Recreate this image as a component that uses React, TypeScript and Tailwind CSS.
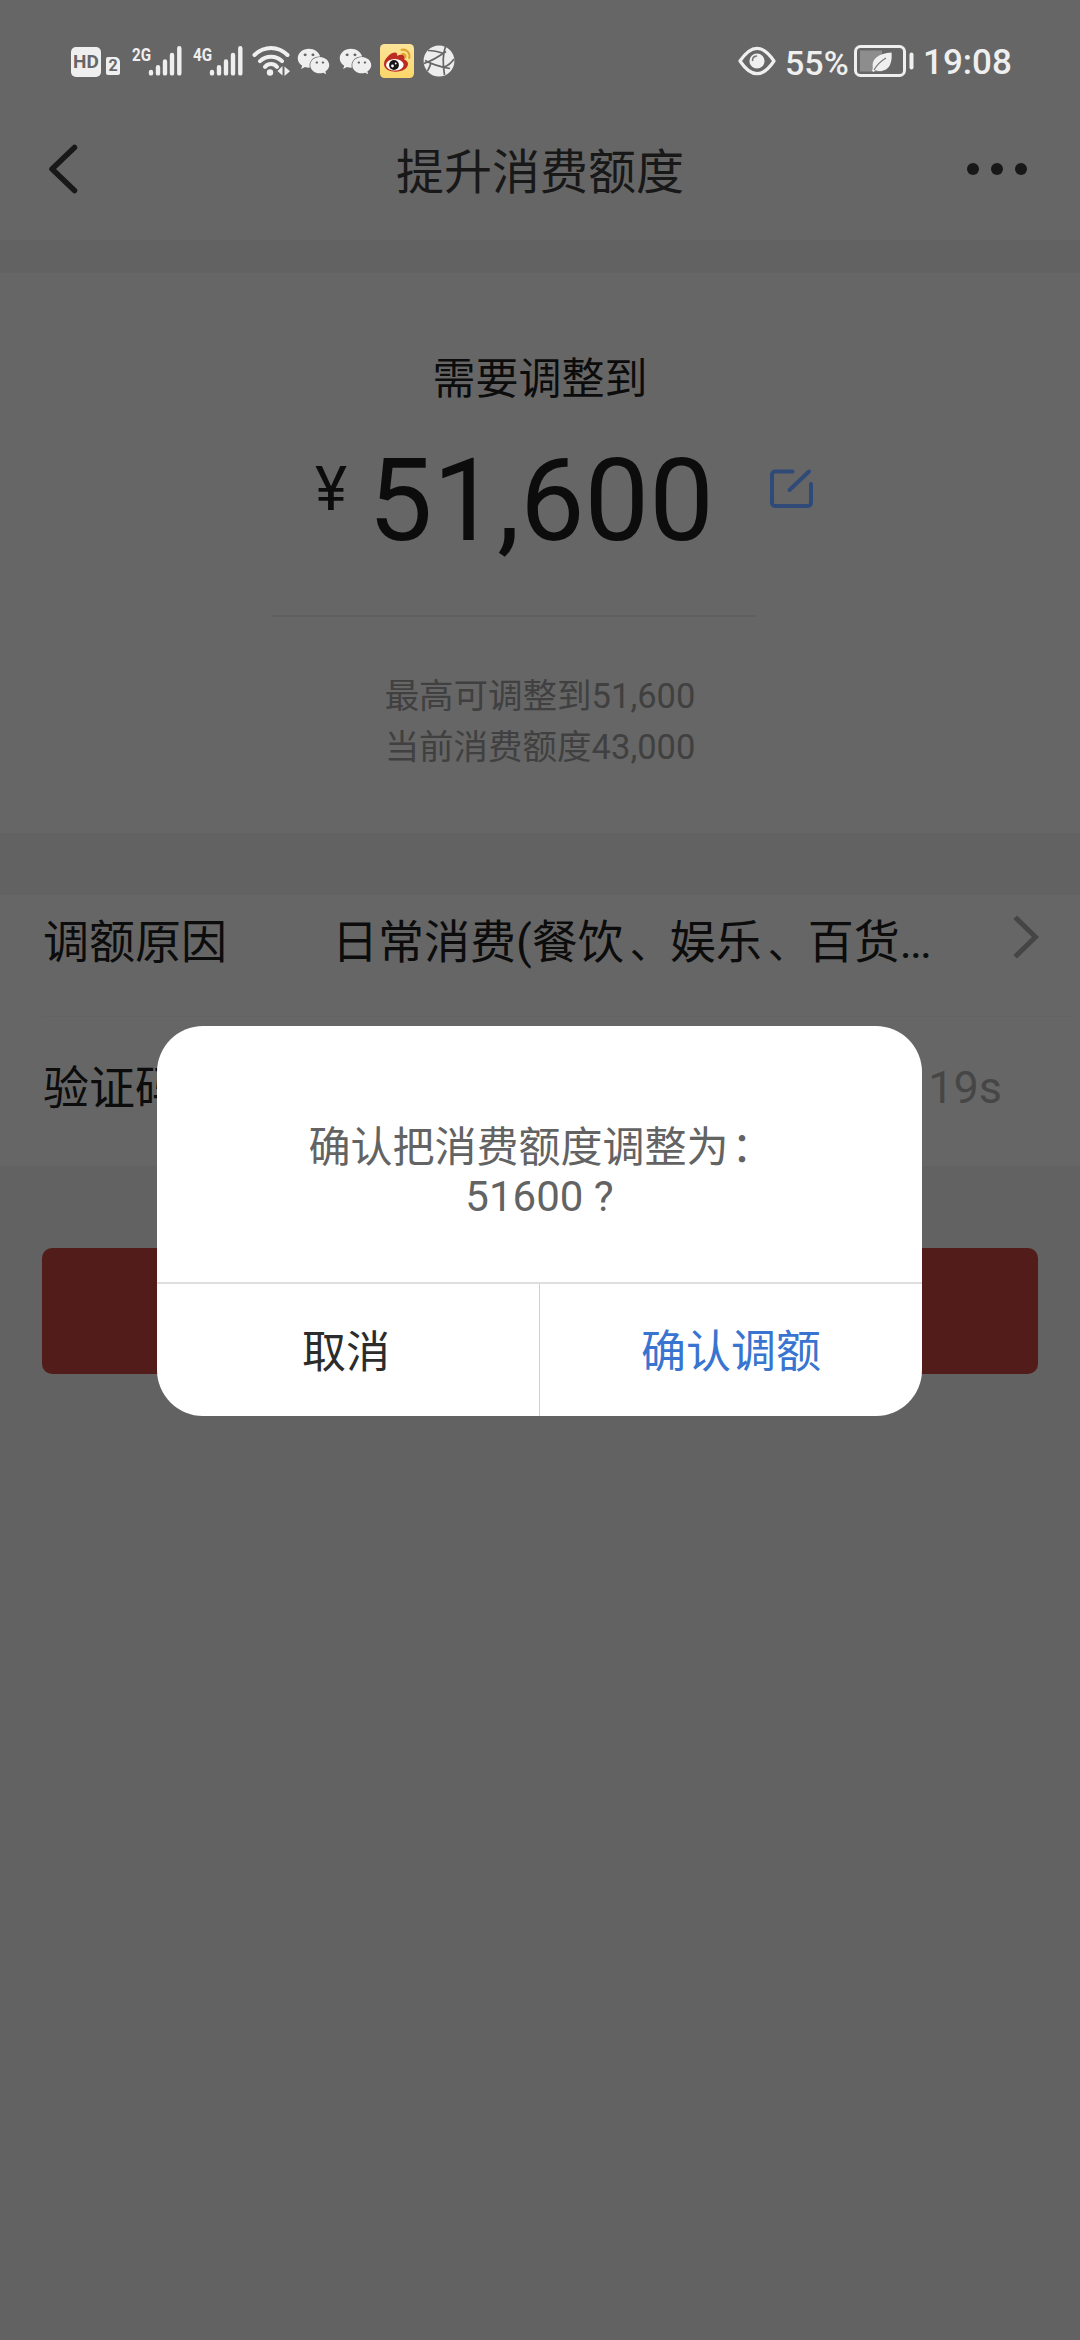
import React from "react";
import { FaWeixin } from "react-icons/fa";

const SANS = "font-['Roboto','Noto_Sans_CJK_SC',sans-serif]";

function SignalBars() {
  return (
    <svg className="block h-[32px] w-[36px]" viewBox="0 0 36 32" stroke="#efefef" strokeWidth="4.4" strokeLinecap="round">
      <path d="M4 28.4V27M11 28.4v-6.2M18 28.4V16.4M25 28.4V10M32.3 28.4V3.2" />
    </svg>
  );
}

function Signal({ label }: { label: string }) {
  return (
    <div className="flex items-start">
      <span className="mt-[1px] w-[15px] origin-left scale-x-[0.8] whitespace-nowrap text-[19px] leading-[17px] font-bold">{label}</span>
      <SignalBars />
    </div>
  );
}

function Wifi() {
  return (
    <svg className="block h-[34px] w-[40px]" viewBox="0 0 40 34" fill="none" stroke="#efefef" strokeWidth="4" strokeLinecap="round">
      <path d="M2.5 11C12 1.6 26 1.6 35.5 11M8 17.2c6-6 16-6 22 0M13 22.8c3.500-3.600 8.500-3.600 12 0" />
      <circle cx="18" cy="28.500" r="3.200" fill="#efefef" stroke="none" />
      <path d="M30.500 22v9.500l-5-4.500zM32.500 32v-9.500l5.500 4.800z" fill="#efefef" stroke="none" />
    </svg>
  );
}

function Weibo() {
  return (
    <svg className="block h-[34px] w-[34px]" viewBox="0 0 34 34">
      <defs>
        <linearGradient id="wb" x1="0" y1="0" x2="0" y2="1">
          <stop offset="0" stopColor="#fbe49a" />
          <stop offset="1" stopColor="#fbd669" />
        </linearGradient>
      </defs>
      <rect width="34" height="34" rx="4.500" fill="url(#wb)" />
      <path d="M4 20c0-5 6.500-11.500 11-11.500 2 0 2.500 1.500 2 3.300 3-1.600 8-2 7.700 1.700 0 1-.5 2-.3 2.300 2 .6 3.600 2 3.600 4.300 0 4.500-5.600 7.600-12.200 7.600C9 27.700 4 24.800 4 20z" fill="#bd2c22" />
      <ellipse cx="14.800" cy="20.800" rx="8.800" ry="5.800" fill="#fff" />
      <circle cx="14" cy="21" r="4.900" fill="#161616" />
      <circle cx="12.500" cy="22" r="1.400" fill="#fff" />
      <circle cx="15.700" cy="19.500" r="0.900" fill="#fff" />
      <path d="M21.500 5.800c5-1 9 3 7.700 8.200M22.300 10c2.300-.4 3.700 1.200 3 3.300" fill="none" stroke="#dfa22e" strokeWidth="2" strokeLinecap="round" />
    </svg>
  );
}

function Aperture() {
  return (
    <svg className="block h-[32px] w-[32px]" viewBox="0 0 32 32" fill="none">
      <circle cx="16" cy="16" r="15.400" fill="#ededed" />
      <path d="M1 18.500Q11 15 23 6.500M2 15.500Q12 21 27 23.500M22.500 1.500Q18.500 12 21.500 30M5 5.500Q12 5.500 21 8.500M4.500 26Q7 22 8 17.500M31 14Q27 20 21 22" stroke="#666" strokeWidth="1.700" />
    </svg>
  );
}

function Eye() {
  return (
    <svg className="block h-[30px] w-[38px]" viewBox="0 0 38 30" fill="none">
      <path d="M2 15C8 6 13 2.300 19 2.300S30 6 36 15C30 24 25 27.700 19 27.700S8 24 2 15z" stroke="#efefef" strokeWidth="3.200" strokeLinejoin="round" />
      <circle cx="19" cy="15" r="7.600" fill="#efefef" />
      <path d="M14.500 14.500c0-2.500 1.600-4.200 4-4.500" stroke="#777" strokeWidth="1.600" strokeLinecap="round" />
    </svg>
  );
}

function Battery() {
  return (
    <svg className="block h-[32px] w-[62px]" viewBox="0 0 62 32" fill="none">
      <rect x="6" y="5.500" width="22" height="21" fill="#8d8d8d" />
      <rect x="1.500" y="1.500" width="49" height="29" rx="5" stroke="#efefef" strokeWidth="3" />
      <path d="M57.500 9.500v13" stroke="#efefef" strokeWidth="4" strokeLinecap="round" />
      <path d="M37.500 7.500c1 9-1.500 18.500-11.500 18.500-1.700 0-3-.3-4.200-1l-2.300 2-1.800-1.500c1-1.200 1.300-1.800 1-3.500-1-8.500 6-13.500 18.800-14.500z" fill="#efefef" />
      <path d="M20 25c3-5.500 7-9 12-12" stroke="#777" strokeWidth="1.200" />
    </svg>
  );
}

function StatusBar() {
  return (
    <div className="flex h-[120px] items-start text-[#efefef]">
      <div className="mt-[47px] ml-[71px] flex h-[30px] w-[30px] items-center justify-center rounded-[5px] bg-[#efefef] text-[19px] font-bold text-[#666]">
        HD
      </div>
      <div className="mt-[57px] ml-[5px] flex h-[18px] w-[14px] items-center justify-center rounded-[2px] rounded-tr-[5px] bg-[#efefef] text-[16px] font-bold text-[#666]">
        2
      </div>
      <div className="mt-[45px] ml-[12px] flex">
        <Signal label="2G" />
      </div>
      <div className="mt-[45px] ml-[10px] flex">
        <Signal label="4G" />
      </div>
      <div className="mt-[44px] ml-[8px]">
        <Wifi />
      </div>
      <FaWeixin className="mt-[45px] ml-[5px] size-[33px]" />
      <FaWeixin className="mt-[45px] ml-[9px] size-[33px]" />
      <div className="mt-[44px] ml-[8px]">
        <Weibo />
      </div>
      <div className="mt-[45px] ml-[9px]">
        <Aperture />
      </div>
      <div className="mt-[46px] ml-[283px]">
        <Eye />
      </div>
      <span className="mt-[43px] ml-[9px] w-[69px] text-[34px] leading-[40px] font-medium whitespace-nowrap">55%</span>
      <div className="mt-[45px]">
        <Battery />
      </div>
      <span className="mt-[43px] ml-[7px] text-[35px] leading-[40px] font-medium whitespace-nowrap">19:08</span>
    </div>
  );
}

function Header() {
  return (
    <div className="flex h-[120px] items-start justify-between">
      <svg className="mt-[23px] ml-[47px] h-[52px] w-[34px]" viewBox="0 0 34 52" fill="none">
        <path d="M27.500 4.500L5 26l22.500 21.500" stroke="#181818" strokeWidth="5.500" strokeLinecap="round" strokeLinejoin="round" />
      </svg>
      <h1 className="mt-[23px] ml-[32px] text-[48px] leading-[60px] text-[#181818]">提升消费额度</h1>
      <div className="mt-[43px] mr-[53px] flex gap-[12px]">
        <i className="size-[12px] rounded-full bg-[#181818]" />
        <i className="size-[12px] rounded-full bg-[#181818]" />
        <i className="size-[12px] rounded-full bg-[#181818]" />
      </div>
    </div>
  );
}

function AmountPanel() {
  return (
    <section className="flex h-[560px] flex-col items-center bg-[#666]">
      <p className="mt-[76px] text-[43px] leading-[60px] text-[#0c0c0c]">需要调整到</p>
      <div className="flex w-full items-start text-[#0c0c0c]">
        <span className="mt-[44px] ml-[315px] w-[53px] text-[61px] leading-[72px]">¥</span>
        <span className="mt-[25px] w-[402px] text-[115px] leading-[134px]">51,600</span>
        <svg className="mt-[59px] h-[42px] w-[44px]" viewBox="0 0 44 42" fill="none" stroke="#304a78" strokeWidth="4" strokeLinecap="round">
          <path d="M22.500 3.500H5a3 3 0 0 0-3 3V35a3 3 0 0 0 3 3h33a3 3 0 0 0 3-3V16M39 3.500L19.500 22" />
        </svg>
      </div>
      <div className="mt-[47px] mr-[52px] h-[2px] w-[484px] bg-[#5f5f5f]" />
      <p className="mt-[54px] text-center text-[34.500px] leading-[51px] text-[#404040]">
        最高可调整到51,600
        <br />
        当前消费额度43,000
      </p>
    </section>
  );
}

function EnumComma() {
  return <span className="pl-[6px] text-[40px]">、</span>;
}

function FormRows() {
  return (
    <section className="h-[271px] bg-[#666] text-[46px] leading-[60px] text-[#0c0c0c]">
      <div className="flex h-[121px] items-start pt-[17px]">
        <span className="ml-[43px] w-[289px]">调额原因</span>
        <span className="w-[681px] whitespace-nowrap">
          日常消费(餐饮<EnumComma />娱乐<EnumComma />百货<span className="tracking-[-2px]">...</span>
        </span>
        <svg className="mt-[3px] h-[44px] w-[28px]" viewBox="0 0 28 44" fill="none">
          <path d="M4 4l18.500 18L4 40" stroke="#454545" strokeWidth="5" strokeLinecap="square" />
        </svg>
      </div>
      <div className="mr-[8px] ml-[43px] h-px bg-[#636363]" />
      <div className="flex items-start justify-between pt-[41px] pr-[78px] pl-[43px]">
        <span>验证码</span>
        <span className="text-[45px] text-[#464646]">19s</span>
      </div>
    </section>
  );
}

function ConfirmDialog() {
  return (
    <div className="absolute top-[1026px] left-[157px] flex h-[390px] w-[765px] flex-col overflow-hidden rounded-[46px] bg-white">
      <p className="h-[256px] pt-[97px] text-center text-[42px] leading-[49px] text-[#636363]">
        确认把消费额度调整为<span className="inline-block translate-x-[3px]">：</span>
        <br />
        51600 ?
      </p>
      <div className="flex grow border-t-2 border-[#dedede]">
        <button className="w-[382px] pt-[6px] pr-[4px] text-[44px] text-[#2c2c2c]">取消</button>
        <i className="w-px bg-[#d0d0d0]" />
        <button className="w-[382px] pt-[6px] text-[45px] text-[#3874d0]">确认调额</button>
      </div>
    </div>
  );
}

export default function App() {
  return (
    <main className={`relative h-[2340px] w-[1080px] overflow-hidden bg-[#626262] ${SANS}`}>
      <div className="bg-[#666]">
        <StatusBar />
        <Header />
      </div>
      <div className="h-[33px]" />
      <AmountPanel />
      <div className="h-[62px]" />
      <FormRows />
      <div className="mx-[42px] mt-[82px] h-[126px] rounded-[10px] bg-[#521c1a]" />
      <ConfirmDialog />
    </main>
  );
}
